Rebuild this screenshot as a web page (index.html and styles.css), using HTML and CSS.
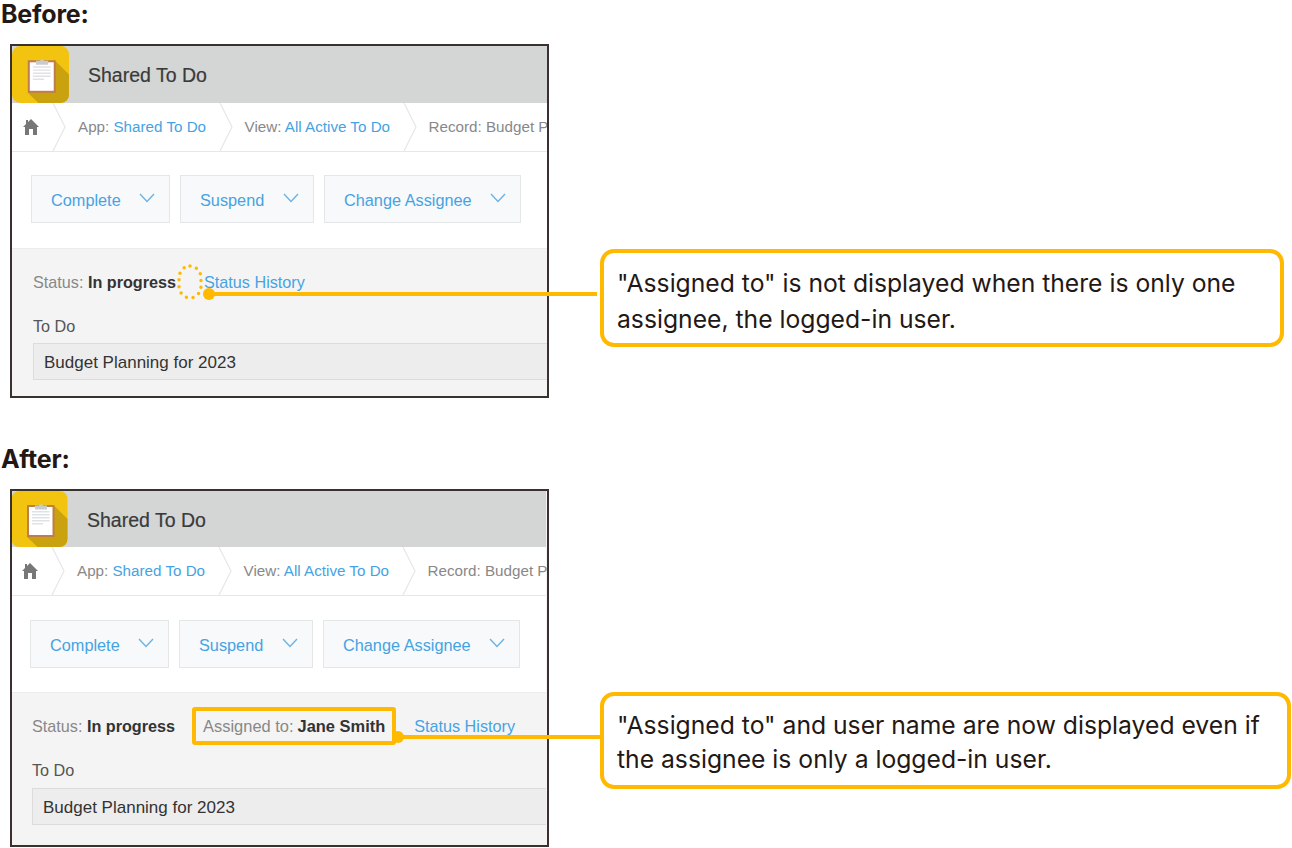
FILE: index.html
```html
<!DOCTYPE html>
<html lang="en">
<head>
<meta charset="utf-8">
<title>Before and After</title>
<link rel="stylesheet" href="styles.css">
</head>
<body>
<svg class="defs" width="0" height="0" aria-hidden="true">
  <defs>
    <symbol id="app-icon" viewBox="0 0 56 56">
      <rect width="56" height="56" rx="8" fill="#f3c40f"/>
      <path d="M43 15 56 28V48a8 8 0 0 1-8 8H26L15.500 46Z" fill="#caa10f"/>
      <rect x="15.500" y="14" width="27.500" height="32" fill="#c07d4c"/>
      <rect x="17.500" y="16" width="23.500" height="28" fill="#fff"/>
      <path d="M20.500 20h17.500v1.400H20.500zM20.500 23h17.500v1.400H20.500zM20.500 26h17.500v1.400H20.500zM20.500 29h17.500v1.400H20.500zM20.500 32h11v1.400H20.500z" fill="#dfe2e5"/>
      <path d="M23.500 18.500v-4h4a2.200 2.200 0 0 1 4 0h4v4Z" fill="#c9ccce"/>
    </symbol>
    <symbol id="home" viewBox="0 0 16 16">
      <path d="M8 0 16 8H14V16H10V10H6V16H2V8H0L3 5V1H5V3Z" fill="#777"/>
    </symbol>
    <symbol id="crumb" viewBox="0 0 14 48" preserveAspectRatio="none">
      <path d="M1 0 13 24 1 48" fill="none" stroke="#e3e8e8" stroke-width="1.200"/>
    </symbol>
    <symbol id="caret" viewBox="0 0 16 10">
      <path d="M1 1 8 8.500 15 1" fill="none" stroke="#6db3e6" stroke-width="1.400"/>
    </symbol>
  </defs>
</svg>

<main class="page">
  <section class="block block-before">
    <h2 class="heading">Before:</h2>
    <div class="row">
      <div class="panel">
        <div class="panel-inner">
          <header class="app-bar">
            <svg class="app-icon"><use href="#app-icon"/></svg>
            <span class="app-title">Shared To Do</span>
          </header>
          <nav class="crumbs">
            <svg class="home"><use href="#home"/></svg>
            <svg class="crumb-sep"><use href="#crumb"/></svg>
            <span class="crumb">App: <a class="link">Shared To Do</a></span>
            <svg class="crumb-sep"><use href="#crumb"/></svg>
            <span class="crumb">View: <a class="link">All Active To Do</a></span>
            <svg class="crumb-sep"><use href="#crumb"/></svg>
            <span class="crumb">Record: Budget P</span>
          </nav>
          <div class="actions">
            <button class="action action-complete">Complete<svg class="caret"><use href="#caret"/></svg></button>
            <button class="action action-suspend">Suspend<svg class="caret"><use href="#caret"/></svg></button>
            <button class="action action-change">Change Assignee<svg class="caret"><use href="#caret"/></svg></button>
          </div>
          <div class="record">
            <div class="status">
              <span class="status-item">Status: <b>In progress</b></span>
              <svg class="ring" viewBox="0 0 26 36"><rect x="2" y="2" width="22" height="32" rx="11" ry="12"/></svg>
              <a class="link">Status History</a>
            </div>
            <div class="field-label">To Do</div>
            <div class="field">Budget Planning for 2023</div>
          </div>
        </div>
      </div>
      <aside class="callout callout-before">"Assigned to" is not displayed when there is only one assignee, the logged-in user.</aside>
      <span class="wire wire-before"></span>
    </div>
  </section>

  <section class="block block-after">
    <h2 class="heading">After:</h2>
    <div class="row">
      <div class="panel panel-after">
        <div class="panel-inner">
          <header class="app-bar">
            <svg class="app-icon"><use href="#app-icon"/></svg>
            <span class="app-title">Shared To Do</span>
          </header>
          <nav class="crumbs">
            <svg class="home"><use href="#home"/></svg>
            <svg class="crumb-sep"><use href="#crumb"/></svg>
            <span class="crumb">App: <a class="link">Shared To Do</a></span>
            <svg class="crumb-sep"><use href="#crumb"/></svg>
            <span class="crumb">View: <a class="link">All Active To Do</a></span>
            <svg class="crumb-sep"><use href="#crumb"/></svg>
            <span class="crumb">Record: Budget P</span>
          </nav>
          <div class="actions">
            <button class="action action-complete">Complete<svg class="caret"><use href="#caret"/></svg></button>
            <button class="action action-suspend">Suspend<svg class="caret"><use href="#caret"/></svg></button>
            <button class="action action-change">Change Assignee<svg class="caret"><use href="#caret"/></svg></button>
          </div>
          <div class="record">
            <div class="status">
              <span class="status-item">Status: <b>In progress</b></span>
              <span class="assigned">Assigned to: <b>Jane Smith</b></span>
              <a class="link">Status History</a>
            </div>
            <div class="field-label">To Do</div>
            <div class="field">Budget Planning for 2023</div>
          </div>
        </div>
      </div>
      <aside class="callout callout-after">"Assigned to" and user name are now displayed even if the assignee is only a logged-in user.</aside>
      <span class="wire wire-after"></span>
    </div>
  </section>
</main>
</body>
</html>
```

FILE: styles.css
```css
* { box-sizing: border-box; }

html, body { margin: 0; padding: 0; background: #fff; }

body {
  width: 1292px;
  height: 848px;
  overflow: hidden;
  font-family: "Liberation Sans", Arial, sans-serif;
  color: #333;
}

.defs { position: absolute; }

.page { display: flex; flex-direction: column; }

.block { display: flex; flex-direction: column; }
.block-before { height: 445px; }

.heading {
  margin: 0;
  height: 44px;
  padding-left: 1px;
  font-family: Inter, sans-serif;
  font-size: 25px;
  line-height: 29px;
  font-weight: 700;
  letter-spacing: -0.2px;
  color: #231815;
}

.row {
  position: relative;
  display: flex;
  align-items: flex-start;
  padding-left: 10px;
}

.panel {
  width: 539px;
  height: 354px;
  flex: none;
  border: 2px solid #3a302e;
  background: #f4f4f4;
  overflow: hidden;
}
.panel-after { height: 358px; }
.panel-after .panel-inner { margin-left: -1px; margin-right: 1px; }
.panel-after .app-bar { height: 56px; }
.panel-after .app-icon { height: 56px; }
.panel-after .actions { padding-top: 24px; }
.panel-after .field { margin-top: 9px; }

.app-bar {
  display: flex;
  align-items: center;
  height: 57px;
  background: #d4d6d5;
}
.app-icon { width: 57px; height: 57px; flex: none; }
.app-title {
  margin: 2px 0 0 19px;
  font-size: 19.500px;
  -webkit-text-stroke: 0.2px #3a3a3a;
  color: #3a3a3a;
}

.crumbs {
  display: flex;
  align-items: center;
  height: 49px;
  background: #fff;
  border-bottom: 1px solid #e3e8e8;
  white-space: nowrap;
  font-size: 15.200px;
  color: #888;
}
.home { width: 16px; height: 16px; margin: 0 13px 0 11px; flex: none; }
.crumb-sep { width: 14px; height: 48px; flex: none; }
.crumb { margin: 0 12.500px 2px 12px; }
.link { color: #46a3e3; }

.actions {
  display: flex;
  gap: 10px;
  height: 96px;
  padding: 23px 0 0 19px;
  background: #fff;
}
.action {
  display: flex;
  align-items: center;
  justify-content: space-between;
  height: 48px;
  padding: 3px 14px 0 19px;
  border: 1px solid #e3e7e8;
  background: #f7f9fa;
  color: #46a3e3;
  font-family: inherit;
  font-size: 16.300px;
}
.action-complete { width: 139px; }
.action-suspend { width: 134px; }
.action-change { width: 197px; }
.caret { width: 16px; height: 10px; margin-bottom: 5px; flex: none; }

.record {
  padding: 0 0 0 21px;
  border-top: 1px solid #ececec;
  background: #f4f4f4;
  font-size: 16.200px;
}
.status {
  display: flex;
  align-items: center;
  height: 34px;
  margin-top: 16px;
  color: #888;
}
.status b { color: #333; }
.ring {
  width: 26px;
  height: 36px;
  margin: 0 1px 0 1px;
  flex: none;
  fill: none;
  stroke: #ffb900;
  stroke-width: 3.500;
  stroke-linecap: round;
  stroke-dasharray: 0 6.800;
}
.assigned {
  display: flex;
  align-items: center;
  gap: 4px;
  height: 38px;
  margin: 0 18px 0 17px;
  padding: 0 7px;
  border: 4px solid #ffb900;
  border-radius: 3px;
  font-size: 16.450px;
}
.field-label { margin-top: 18px; height: 18px; line-height: 18px; color: #555; }
.field {
  height: 37px;
  margin-top: 8px;
  padding-left: 10px;
  border: 1px solid #dcdcdc;
  border-right: 0;
  background: #ededed;
  font-size: 17px;
  line-height: 37px;
  color: #333;
}

.callout {
  flex: none;
  margin-left: 51px;
  padding: 13px 13px 0 13px;
  border: 4px solid #ffb900;
  border-radius: 14px;
  background: #fff;
  font-family: Inter, sans-serif;
  font-size: 24.700px;
  line-height: 35.500px;
  color: #231815;
}
.callout-before { width: 684px; height: 98px; margin-top: 205px; }
.callout-after { width: 691px; height: 97px; margin-top: 203px; padding-top: 12px; line-height: 34px; }

.wire {
  position: absolute;
  height: 4px;
  background: #ffb900;
}
.wire::before {
  content: "";
  position: absolute;
  left: -6px;
  top: -4px;
  width: 12px;
  height: 12px;
  border-radius: 50%;
  background: #ffb900;
}
.wire-before { left: 209px; top: 248px; width: 388px; }
.wire-after { left: 398px; top: 246px; width: 202px; }
```
